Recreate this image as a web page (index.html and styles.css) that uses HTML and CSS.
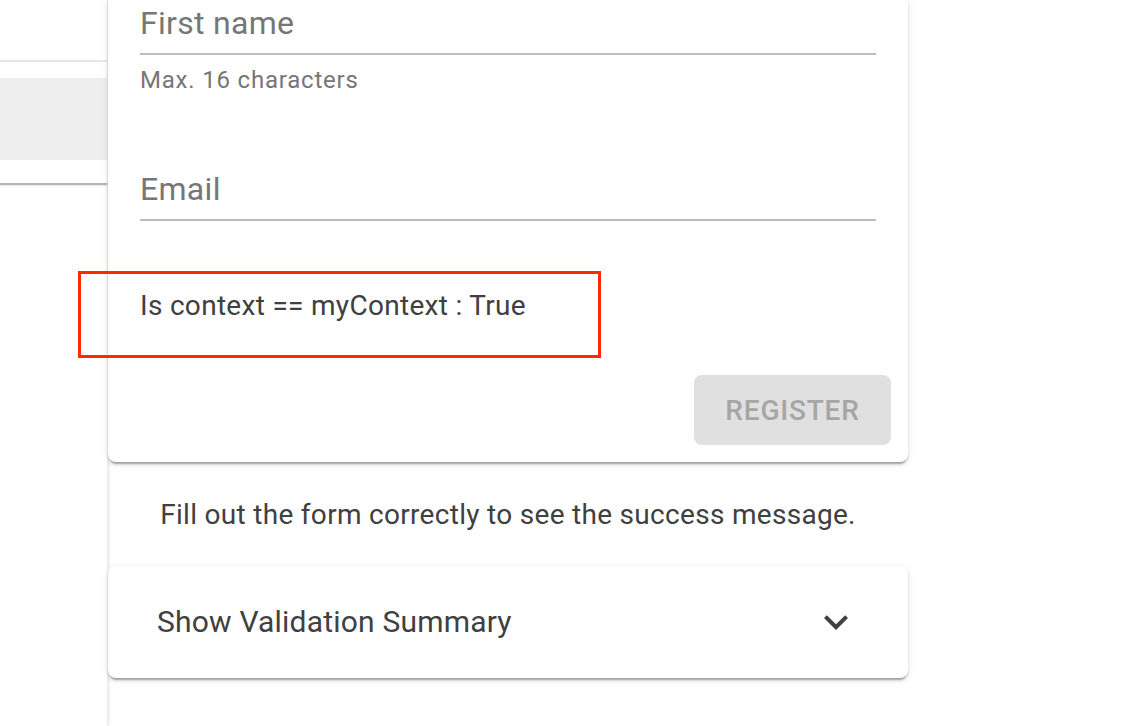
FILE: index.html
```html
<!DOCTYPE html>
<html lang="en">
<head>
<meta charset="utf-8">
<title>Register</title>
<link rel="stylesheet" href="styles.css">
</head>
<body>
<div class="app">
  <aside class="drawer">
    <div class="nav-item first"></div>
    <div class="nav-item selected"></div>
    <div class="nav-divider"></div>
  </aside>
  <main class="main">
    <div class="column">
      <section class="card form-card">
        <div class="card-content">
          <div class="field">
            <div class="input"><span class="label">First name</span></div>
            <p class="helper">Max. 16 characters</p>
          </div>
          <div class="field email">
            <div class="input"><span class="label">Email</span></div>
          </div>
          <p class="context">Is context == myContext : True</p>
        </div>
        <div class="card-actions">
          <button class="btn" disabled>Register</button>
        </div>
        <div class="highlight"></div>
      </section>
      <p class="status">Fill out the form correctly to see the success message.</p>
      <section class="card accordion">
        <span class="summary">Show Validation Summary</span>
        <svg class="chevron" viewBox="0 0 24 24" width="48" height="48"><path d="M16.59 8.59 12 13.17 7.41 8.59 6 10l6 6 6-6z"/></svg>
      </section>
    </div>
  </main>
</div>
</body>
</html>
```
FILE: styles.css
```css
* { box-sizing: border-box; }
html, body { margin: 0; padding: 0; background: #fff; }
body {
  font-family: Roboto, "Liberation Sans", sans-serif;
  color: rgba(0,0,0,0.76);
  height: 726px;
  overflow: hidden;
}
.app { display: flex; height: 726px; }

.drawer {
  width: 108px;
  flex: none;
  background: #fff;
  box-shadow: 1px 0 3px rgba(0,0,0,0.10);
  border-right: 1px solid #ececec;
  position: relative;
  z-index: 1;
}
.nav-item.first { height: 62px; border-bottom: 2px solid #e6e6e6; }
.nav-item.selected { height: 82px; margin-top: 16px; background: #eeeeee; }
.nav-divider {
  margin-top: 23px;
  height: 2px;
  background: #b5b5b5;
  box-shadow: 0 1px 2px rgba(0,0,0,0.12);
}

.main { flex: 1; position: relative; z-index: 2; }
.column { width: 800px; }

.card {
  background: #fff;
  border-radius: 8px;
  box-shadow: 0 4px 2px -2px rgba(0,0,0,0.2), 0 2px 2px 0 rgba(0,0,0,0.14), 0 2px 6px 0 rgba(0,0,0,0.12);
}
.form-card {
  position: relative;
  border-top-left-radius: 0;
  border-top-right-radius: 0;
}
.card-content { padding: 3px 32px 0; }

.input {
  padding-bottom: 10px;
  border-bottom: 2px solid #bdbdbd;
}
.label {
  display: block;
  font-size: 32px;
  line-height: 40px;
  letter-spacing: 0.3px;
  color: #767676;
}
.helper {
  margin: 9px 0 0;
  font-size: 24px;
  line-height: 32px;
  letter-spacing: 0.8px;
  color: #767676;
}
.field.email { margin-top: 73px; }
.context {
  margin: 65px 0 0;
  font-size: 28px;
  line-height: 40px;
  letter-spacing: 0.3px;
  color: #404040;
}

.card-actions {
  display: flex;
  justify-content: flex-end;
  padding: 49px 17px 17px;
}
.btn {
  font-family: Roboto, "Liberation Sans", sans-serif;
  font-weight: 500;
  font-size: 28px;
  letter-spacing: 0.8px;
  text-transform: uppercase;
  height: 70px;
  width: 197px;
  border: none;
  border-radius: 8px;
  background: #e0e0e0;
  color: #a6a6a6;
  padding: 0;
}

.highlight {
  position: absolute;
  left: -30px;
  top: 271px;
  width: 523px;
  height: 87px;
  border: 3px solid #ff2a00;
}

.status {
  margin: 0;
  padding-top: 33px;
  text-align: center;
  font-size: 28px;
  line-height: 40px;
  letter-spacing: 0.3px;
  color: #404040;
}

.accordion {
  margin-top: 31px;
  height: 112px;
  display: flex;
  align-items: center;
  justify-content: space-between;
  padding: 0 48px 0 49px;
}
.summary {
  font-size: 30px;
  line-height: 40px;
  letter-spacing: 0.2px;
  color: #404040;
}
.chevron { fill: #404040; display: block; }
```
